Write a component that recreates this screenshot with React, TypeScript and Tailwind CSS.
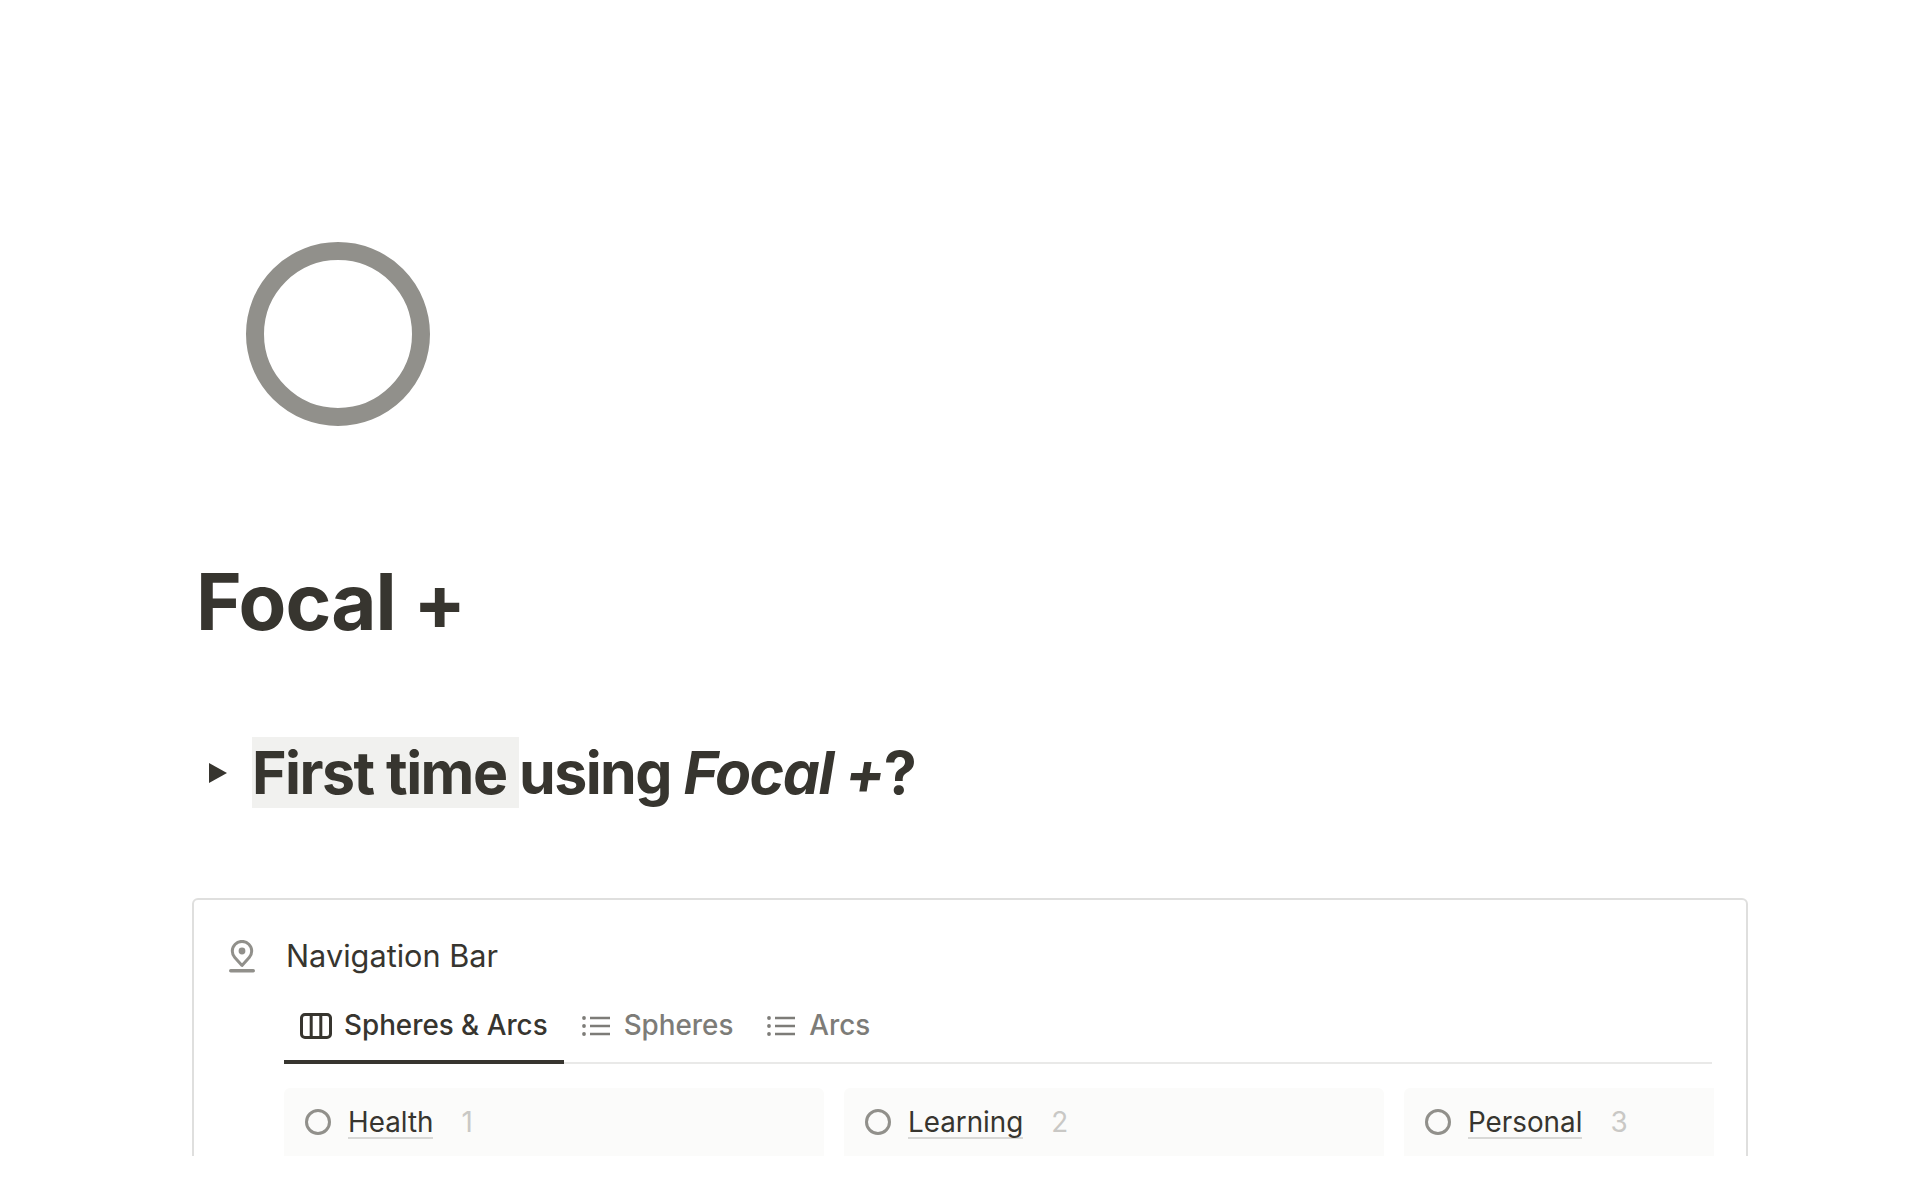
const ink = 'text-[#37352f]'

function ColumnsIcon() {
  return (
    <svg width="32" height="26" viewBox="0 0 32 26" fill="none" stroke="#37352f" strokeWidth="3" className="shrink-0">
      <rect x="1.5" y="1.5" width="29" height="23" rx="3.5" />
      <path d="M11.2 2v22M20.8 2v22" />
    </svg>
  )
}

function ListIcon() {
  return (
    <svg width="28" height="22" viewBox="0 0 28 22" fill="none" className="shrink-0">
      <circle cx="2" cy="3" r="1.9" fill="#7d7c78" />
      <circle cx="2" cy="11" r="1.9" fill="#7d7c78" />
      <circle cx="2" cy="19" r="1.9" fill="#7d7c78" />
      <path d="M8 3h20M8 11h20M8 19h20" stroke="#7d7c78" strokeWidth="2.6" />
    </svg>
  )
}

function PinIcon() {
  return (
    <svg width="26" height="33" viewBox="0 0 26 33" fill="none" className="shrink-0">
      <path
        d="M13 25.5 5.8 17.6A10 10 0 0 1 3.3 11 9.7 9.7 0 0 1 13 1.4 9.7 9.7 0 0 1 22.7 11a10 10 0 0 1-2.5 6.6Z"
        stroke="#91908b"
        strokeWidth="3"
        strokeLinejoin="round"
      />
      <circle cx="13" cy="11" r="3.4" fill="#91908b" />
      <rect x="0" y="29" width="26" height="3.4" rx="1.7" fill="#91908b" />
    </svg>
  )
}

function Tab({ label, icon, active }: { label: string; icon: React.ReactNode; active?: boolean }) {
  return (
    <div
      className={
        active
          ? 'flex h-[60px] items-center gap-[12px] border-b-[4px] border-[#37352f] pb-[12px] pl-[16px] pr-[16px] -mb-[2px]'
          : 'flex h-[58px] items-center gap-[14px] pb-[14px] pl-[18px] pr-[16px]'
      }
    >
      {icon}
      <span className={active ? `text-[27.8px] font-medium ${ink}` : 'text-[27.8px] font-medium text-[#7d7c78]'}>{label}</span>
    </div>
  )
}

function Column({ name, count, width }: { name: string; count: number; width: string }) {
  return (
    <div className={`${width} flex h-[80px] shrink-0 items-start gap-[17px] rounded-[6px] bg-[#fbfbfa] pl-[21px] pt-[21px]`}>
      <div className="h-[26px] w-[26px] shrink-0 rounded-full border-[3px] border-[#91908b]" />
      <span className={`border-b-2 border-[#d8d8d6] pb-[1px] text-[27.8px] leading-[27px] ${ink}`}>{name}</span>
      <span className="ml-[11px] text-[27.8px] leading-[27px] text-[#c9c8c5]">{count}</span>
    </div>
  )
}

export default function App() {
  return (
    <div className="h-[1156px] overflow-hidden bg-white pl-[192px] font-['Inter',sans-serif]">
      <div className="ml-[54px] pt-[242px]">
        <div className="h-[184px] w-[184px] rounded-full border-[18px] border-[#91908b]" />
      </div>

      <h1 className={`ml-[4px] mt-[129px] text-[78px] font-bold leading-[94px] tracking-[-0.012em] ${ink}`}>Focal +</h1>

      <div className="mt-[88px] flex items-center">
        <svg width="18" height="20" viewBox="0 0 18 20" className="ml-[17px] shrink-0">
          <path d="M0 0 18 10 0 20Z" fill="#37352f" />
        </svg>
        <h2 className={`ml-[25px] text-[59px] font-[650] leading-[71px] tracking-[-0.026em] ${ink}`}>
          <span className="bg-[#f1f1ef]">First time </span>
          using <em>Focal +</em>?
        </h2>
      </div>

      <div className="mt-[90px] h-[400px] w-[1556px] rounded-[6px] border-2 border-[#dfdfde] pl-[35px]">
        <div className="mt-[38px] flex items-center">
          <PinIcon />
          <span className={`ml-[31px] text-[30.7px] leading-[36px] ${ink}`}>Navigation Bar</span>
        </div>

        <div className="ml-[55px] mt-[30px] w-[1428px]">
          <div className="flex items-start border-b-2 border-[#e9e9e8]">
            <Tab label="Spheres & Arcs" icon={<ColumnsIcon />} active />
            <Tab label="Spheres" icon={<ListIcon />} />
            <Tab label="Arcs" icon={<ListIcon />} />
          </div>
          <div className="mt-[24px] flex w-[1430px] gap-[20px] overflow-hidden">
            <Column name="Health" count={1} width="w-[540px]" />
            <Column name="Learning" count={2} width="w-[540px]" />
            <Column name="Personal" count={3} width="w-[540px]" />
          </div>
        </div>
      </div>
    </div>
  )
}
